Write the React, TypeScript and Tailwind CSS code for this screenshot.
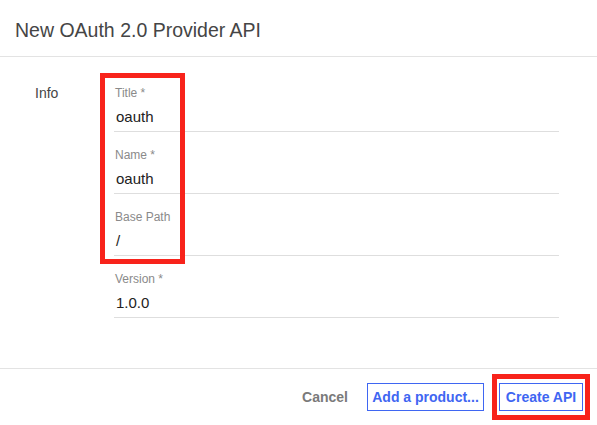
import React from "react";

const fields = [
  { label: "Title *", value: "oauth" },
  { label: "Name *", value: "oauth" },
  { label: "Base Path", value: "/" },
  { label: "Version *", value: "1.0.0" },
];

export default function App() {
  return (
    <div className="relative flex h-[425px] w-[597px] flex-col bg-white font-['Liberation_Sans',Arial,sans-serif]">
      <div className="flex h-[57px] shrink-0 items-start border-b border-[#e3e3e3] px-[15px] pt-[19px]">
        <h1 className="text-[19.5px] leading-[22px] text-[#454545]">New OAuth 2.0 Provider API</h1>
      </div>

      <div className="flex flex-1">
        <div className="w-[114px] shrink-0 pl-[35px] pt-[26px] text-[14px] leading-[20px] text-[#454545]">Info</div>
        <div className="w-[445px] pt-[29px]">
          {fields.map((f) => (
            <div key={f.label} className="mb-[16px] border-b border-[#dedede] pb-[4px]">
              <div className="pl-[1px] text-[12px] leading-[14px] text-[#8a8a8a]">{f.label}</div>
              <div className="mt-[7px] pl-[2px] text-[15px] leading-[20px] text-[#222]">{f.value}</div>
            </div>
          ))}
        </div>
      </div>

      <div className="flex h-[57px] shrink-0 items-center justify-end border-t border-[#e3e3e3] pr-[7px]">
        <span className="mr-[19px] text-[14px] font-bold leading-[20px] text-[#7a7a7a]">Cancel</span>
        <button className="flex h-[28px] w-[117px] items-center justify-center border border-[#3f66f2] text-[14px] font-bold text-[#3f66f2]">
          Add a product...
        </button>
        <div className="ml-[8px] border-[5px] border-[#f8231b] px-[2px] py-[4px]">
          <button className="flex h-[28px] w-[84px] items-center justify-center border border-[#3f66f2] text-[14px] font-bold text-[#3f66f2]">
            Create API
          </button>
        </div>
      </div>

      <div className="pointer-events-none absolute left-[100px] top-[73px] h-[191px] w-[85px] border-[5px] border-[#f8231b]" />
    </div>
  );
}
